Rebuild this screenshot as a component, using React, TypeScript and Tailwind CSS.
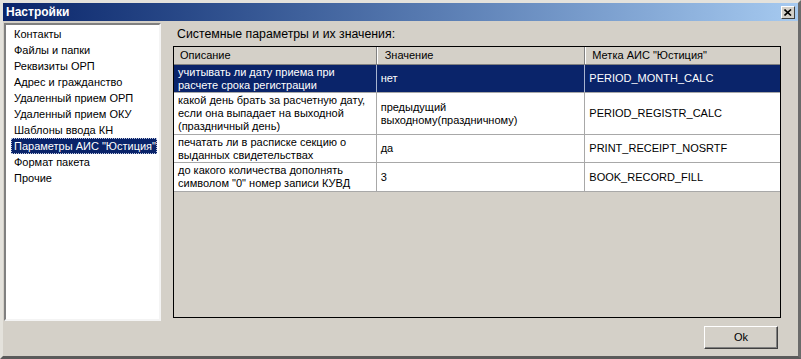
const items = [
  "Контакты",
  "Файлы и папки",
  "Реквизиты ОРП",
  "Адрес и гражданство",
  "Удаленный прием ОРП",
  "Удаленный прием ОКУ",
  "Шаблоны ввода КН",
  'Параметры АИС "Юстиция"',
  "Формат пакета",
  "Прочие",
];

type Row = { desc: string[]; value: string[]; tag: string; h: string };

const rows: Row[] = [
  {
    desc: ["учитывать ли дату приема при", "расчете срока регистрации"],
    value: ["нет"],
    tag: "PERIOD_MONTH_CALC",
    h: "h-[28px]",
  },
  {
    desc: [
      "какой день брать за расчетную дату,",
      "если она выпадает на выходной",
      "(праздничный день)",
    ],
    value: ["предыдущий", "выходному(праздничному)"],
    tag: "PERIOD_REGISTR_CALC",
    h: "h-[42px]",
  },
  {
    desc: ["печатать ли в расписке секцию о", "выданных свидетельствах"],
    value: ["да"],
    tag: "PRINT_RECEIPT_NOSRTF",
    h: "h-[28px]",
  },
  {
    desc: ["до какого количества дополнять", 'символом "0" номер записи КУВД'],
    value: ["3"],
    tag: "BOOK_RECORD_FILL",
    h: "h-[29px]",
  },
];

function CloseButton() {
  return (
    <div className="flex h-[13px] w-[14px] items-center justify-center border border-t-white border-l-white border-b-[#404040] border-r-[#404040] bg-[#d4d0c8]">
      <svg width="8" height="7" viewBox="0 0 8 7">
        <path d="M0.5 0.5 L7 6.5 M7 0.5 L0.5 6.5" stroke="#000" strokeWidth="1.6" />
      </svg>
    </div>
  );
}

export default function App() {
  return (
    <div className="h-[359px] w-[801px] overflow-hidden bg-[#d4d0c8] font-['Liberation_Sans',Arial,sans-serif] text-black">
      <div className="flex h-full w-full flex-col border-[3px] border-t-[#e4e2dc] border-l-[#e4e2dc] border-b-[#5a5a5a] border-r-[#6a6a6a]">
        <div className="flex h-[18px] shrink-0 items-center justify-between bg-gradient-to-r from-[#0a246a] to-[#a6caf0] pl-[3px] pr-[3px]">
          <span className="text-[12px] font-bold leading-none text-white">Настройки</span>
          <CloseButton />
        </div>

        <div className="flex flex-col pt-[2px]">
          <div className="flex">
            <div className="ml-[1px] h-[298px] w-[157px] border-2 border-t-[#808080] border-l-[#808080] border-b-[#f4f4f4] border-r-[#f4f4f4] bg-white">
              <div className="flex flex-col pl-[5px] pr-[2px] pt-[1px]">
                {items.map((item, i) => (
                  <div
                    key={item}
                    className={
                      i === 7
                        ? "h-[16px] whitespace-nowrap border border-dotted border-[#c0c8e0] bg-[#0a246a] pl-[2px] text-[11px] leading-[14px] text-white"
                        : "h-[16px] whitespace-nowrap border border-transparent pl-[2px] text-[11px] leading-[14px]"
                    }
                  >
                    {item}
                  </div>
                ))}
              </div>
            </div>

            <div className="ml-[12px] flex w-[608px] flex-col">
              <div className="flex h-[23px] items-center whitespace-nowrap pl-[4px] text-[12.3px]">
                Системные параметры и их значения:
              </div>
              <div className="flex h-[272px] flex-col border border-black bg-[#d4d0c8]">
                <div className="flex h-[18px] border-b border-[#808080] text-[11px]">
                  <div className="flex w-[203px] items-center border-r border-r-[#808080] pl-[6px]">
                    Описание
                  </div>
                  <div className="flex w-[209px] items-center border-r border-r-[#808080] border-l border-l-white pl-[7px]">
                    Значение
                  </div>
                  <div className="flex w-[195px] items-center border-l border-l-white pl-[6px]">
                    Метка АИС "Юстиция"
                  </div>
                </div>
                {rows.map((row, i) => {
                  const sel = i === 0;
                  return (
                    <div
                      key={row.tag}
                      className={
                        "flex border-b border-[#a8a8a8] text-[11px] leading-[13px] " +
                        row.h +
                        (sel ? " bg-[#0a246a] text-white" : " bg-white")
                      }
                    >
                      <div
                        className={
                          "flex w-[203px] flex-col justify-center border-r pl-[4px] " +
                          (sel ? "border-[#a8b4d0]" : "border-[#a8a8a8]")
                        }
                      >
                        {row.desc.map((l) => (
                          <span key={l}>{l}</span>
                        ))}
                      </div>
                      <div
                        className={
                          "flex w-[209px] flex-col justify-center border-r pl-[4px] " +
                          (sel ? "border-[#a8b4d0]" : "border-[#a8a8a8]")
                        }
                      >
                        {row.value.map((l) => (
                          <span key={l}>{l}</span>
                        ))}
                      </div>
                      <div className="flex w-[195px] flex-col justify-center pl-[4px]">
                        {row.tag}
                      </div>
                    </div>
                  );
                })}
              </div>
            </div>
          </div>

          <div className="mt-[5px] flex justify-end pr-[20px]">
            <button className="h-[23px] w-[74px] border border-t-white border-l-white border-b-[#404040] border-r-[#404040] bg-[#d4d0c8] text-[11px] shadow-[inset_-1px_-1px_0_#808080]">
              Ok
            </button>
          </div>
        </div>
      </div>
    </div>
  );
}
